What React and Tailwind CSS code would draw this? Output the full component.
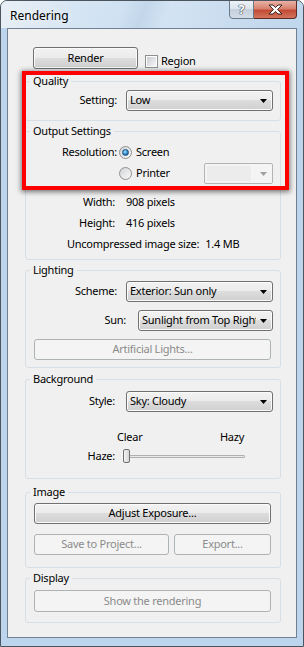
import React from 'react'

// ─── Vista-ish control styles ────────────────────────────────────────────────

const FACE =
  'flex items-center rounded-[3px] border border-[#707070] bg-[linear-gradient(to_bottom,#f2f2f2_0%,#ebebeb_50%,#dddddd_50%,#cfcfcf_100%)] shadow-[inset_0_0_0_1px_#fbfbfb] text-black'
const BTN = `${FACE} justify-center`
const BTN_OFF =
  'flex items-center justify-center rounded-[3px] border border-[#adb2b5] bg-[#f4f4f4] text-[#8b8b8b]'

function Arrow({ color = '#000' }) {
  return (
    <svg width="7" height="4" viewBox="0 0 7 4" className="shrink-0">
      <path d="M0 0h7L3.5 4z" fill={color} />
    </svg>
  )
}

function Combo({ value, className = '' }) {
  return (
    <div className={`${FACE} h-[21px] pl-[3px] pr-[5px] ${className}`}>
      <span className="flex-1 min-w-0 overflow-hidden whitespace-nowrap">{value}</span>
      <span className="pl-[4px] flex items-center">
        <Arrow />
      </span>
    </div>
  )
}

function Radio({ checked }) {
  return (
    <span className="w-[13px] h-[13px] rounded-full border border-[#8e8f8f] bg-[linear-gradient(135deg,#d2d4d6,#fbfbfb)] flex items-center justify-center shrink-0">
      {checked && (
        <span className="w-[7px] h-[7px] rounded-full bg-[radial-gradient(circle_at_40%_35%,#a6e6ff_0%,#3b97d3_45%,#173f72_100%)] border border-[#1c4e83]" />
      )}
    </span>
  )
}

function Group({ title, className = '', children }) {
  return (
    <fieldset className={`w-[256px] border border-[#d5dfe5] rounded-[3px] ${className}`}>
      <legend className="ml-[4px] px-[3px] leading-[16px]">{title}</legend>
      {children}
    </fieldset>
  )
}

// ─── Window ──────────────────────────────────────────────────────────────────

export default function App() {
  return (
    <div className="relative w-[304px] h-[647px] overflow-hidden rounded-t-[7px] border border-[#4a5560] bg-[#bcd5ec] font-['Noto_Sans',sans-serif] text-[11px] tracking-[-0.25px] text-black">
      {/* title bar */}
      <div className="h-[27px] flex items-start justify-between bg-[linear-gradient(110deg,#e9eff5_0%,#d6e5f3_25%,#cfe1f2_40%,#c3d7eb_47%,#d3e3f3_55%,#cadcef_75%,#bfd6ec_100%)]">
        <span className="mt-[7px] ml-[9px] text-[12px] leading-[16px] tracking-normal [text-shadow:0_0_6px_#fff]">Rendering</span>
        <div className="flex mr-[6px] -mt-[1px]">
          <div className="w-[25px] h-[19px] rounded-bl-[4px] border border-[#6b7887] bg-[linear-gradient(to_bottom,#edf2f7_0%,#d9e2eb_50%,#c4d0dc_50%,#d3dde7_100%)] flex items-center justify-center">
            <span className="text-white font-bold text-[13px] leading-none [text-shadow:0_0_1px_#2c3a48,0_0_1px_#2c3a48,0_0_1px_#2c3a48]">?</span>
          </div>
          <div className="w-[43px] h-[19px] rounded-br-[4px] border border-l-0 border-[#5b2a27] bg-[linear-gradient(to_bottom,#e9b1a4_0%,#d7826f_45%,#c34b35_55%,#d2755b_100%)] flex items-center justify-center">
            <svg width="15" height="11" viewBox="0 0 15 11">
              <path
                d="M1 1h4l2.5 2.6L10 1h4L9.6 5.5 14 10h-4L7.5 7.4 5 10H1l4.4-4.5z"
                fill="#fff"
                stroke="#3a2320"
                strokeWidth="1"
                strokeLinejoin="round"
              />
            </svg>
          </div>
        </div>
      </div>

      {/* client area */}
      <div className="mx-[6px] h-[610px] border border-[#6f8193] bg-[#f0f0f0] pt-[18px] pl-[17px]">
        <div className="flex items-start ml-[8px]">
          <div className={`${BTN} w-[105px] h-[22px]`}>Render</div>
          <div className="flex items-center ml-[7px] mt-[6px] h-[16px] leading-[16px]">
            <span className="w-[13px] h-[13px] border border-[#8e8f8f] bg-white flex items-center justify-center">
              <span className="w-[9px] h-[9px] bg-[linear-gradient(135deg,#c9ccd1,#f7f7f7)]" />
            </span>
            <span className="ml-[3px]">Region</span>
          </div>
        </div>

        <Group title="Quality" className="mt-[4px] pb-[9px]">
          <div className="flex items-center mt-[1px]">
            <span className="w-[91px] text-right">Setting:</span>
            <Combo value="Low" className="ml-[9px] w-[147px]" />
          </div>
        </Group>

        <Group title="Output Settings" className="mt-[2px] pb-[4px]">
          <div className="flex items-center h-[20px] mt-[3px]">
            <span className="w-[91px] text-right">Resolution:</span>
            <span className="ml-[2px]"><Radio checked /></span>
            <span className="ml-[4px]">Screen</span>
          </div>
          <div className="flex items-center h-[21px] mt-[1px]">
            <span className="ml-[93px]"><Radio /></span>
            <span className="ml-[4px]">Printer</span>
            <div className="ml-auto mr-[7px] w-[69px] h-[21px] rounded-[2px] border border-[#b4b4b4] bg-[#f4f4f4] flex items-center justify-end pr-[5px]">
              <span className="mr-auto ml-[2px] w-[44px] h-[15px] bg-[#ececec]" />
              <Arrow color="#a0a0a0" />
            </div>
          </div>
          <div className="flex items-center h-[21px] mt-[8px]">
            <span className="w-[89px] text-right">Width:</span>
            <span className="ml-[11px]">908 pixels</span>
          </div>
          <div className="flex items-center h-[21px]">
            <span className="w-[89px] text-right">Height:</span>
            <span className="ml-[11px]">416 pixels</span>
          </div>
          <div className="flex items-center h-[21px] pl-[41px]">
            <span>Uncompressed image size:</span>
            <span className="ml-[6px]">1.4 MB</span>
          </div>
        </Group>

        <Group title="Lighting" className="mt-[2px] pb-[7px]">
          <div className="flex items-center mt-[3px]">
            <span className="w-[91px] text-right">Scheme:</span>
            <Combo value="Exterior: Sun only" className="ml-[9px] w-[147px]" />
          </div>
          <div className="flex items-center mt-[8px]">
            <span className="w-[100px] text-right">Sun:</span>
            <Combo value="Sunlight from Top Right" className="ml-[12px] w-[135px]" />
          </div>
          <div className={`${BTN_OFF} ml-[8px] mt-[8px] w-[237px] h-[21px]`}>Artificial Lights...</div>
        </Group>

        <Group title="Background" className="mt-[3px] pb-[14px]">
          <div className="flex items-center mt-[4px]">
            <span className="w-[89px] text-right">Style:</span>
            <Combo value="Sky: Cloudy" className="ml-[11px] w-[147px]" />
          </div>
          <div className="flex leading-[16px] mt-[17px]">
            <span className="ml-[91px]">Clear</span>
            <span className="ml-auto mr-[36px]">Hazy</span>
          </div>
          <div className="flex items-center h-[16px] mt-[3px]">
            <span className="w-[89px] text-right">Haze:</span>
            <div className="relative ml-[8px] w-[122px] h-[14px] flex items-center">
              <div className="w-full h-[3px] border border-[#b0b0b0] bg-[#e7eaea] rounded-[1px]" />
              <div className="absolute left-0 top-0 w-[7px] h-[14px] rounded-[2px] border border-[#707070] bg-[linear-gradient(to_right,#f2f2f2,#d5d5d5)]" />
            </div>
          </div>
        </Group>

        <Group title="Image" className="mt-[5px] pb-[12px]">
          <div className={`${BTN} ml-[8px] mt-[3px] w-[237px] h-[21px]`}>Adjust Exposure...</div>
          <div className="flex ml-[8px] mt-[10px] gap-[5px]">
            <div className={`${BTN_OFF} w-[135px] h-[21px]`}>Save to Project...</div>
            <div className={`${BTN_OFF} w-[97px] h-[21px]`}>Export...</div>
          </div>
        </Group>

        <Group title="Display" className="mt-[2px] pb-[10px]">
          <div className={`${BTN_OFF} ml-[8px] mt-[4px] w-[237px] h-[22px]`}>Show the rendering</div>
        </Group>
      </div>

      {/* red annotation box */}
      <div className="absolute left-[21px] top-[70px] w-[267px] h-[119px] border-[4px] border-[#ff0000] shadow-[0_1px_5px_1px_rgba(0,0,0,0.5)]" />
    </div>
  )
}
